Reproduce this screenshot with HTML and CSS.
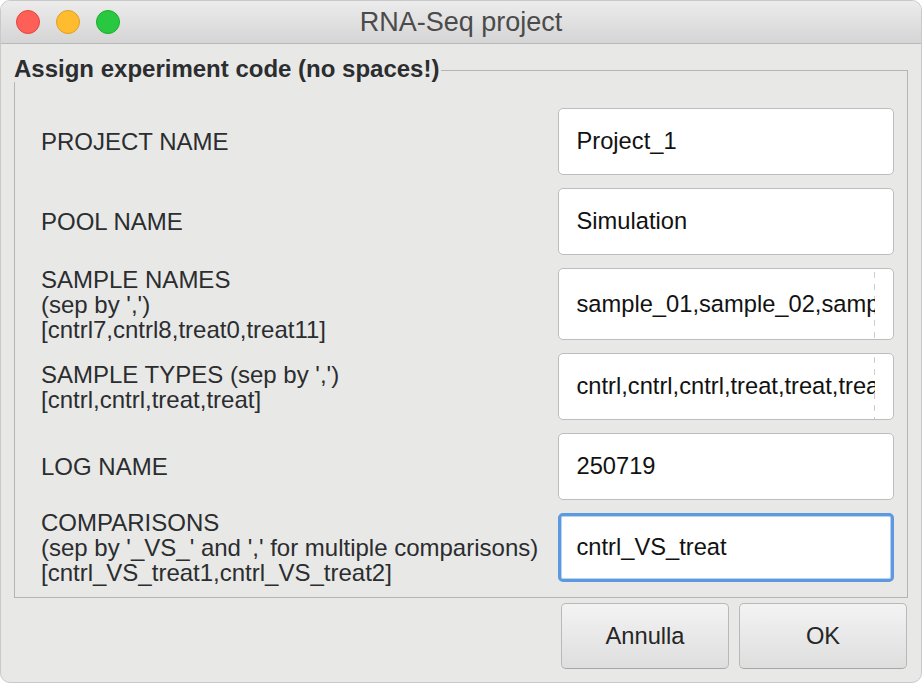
FILE: index.html
```html
<!DOCTYPE html>
<html lang="it">
<head>
<meta charset="utf-8">
<title>RNA-Seq project</title>
<link rel="stylesheet" href="styles.css">
</head>
<body>
<div class="window">
  <div class="titlebar">
    <div class="lights">
      <span class="light red"></span>
      <span class="light yellow"></span>
      <span class="light green"></span>
    </div>
    <div class="title">RNA-Seq project</div>
    <div></div>
  </div>
  <div class="content">
    <div class="group">
      <div class="group-head">
        <span class="group-title">Assign experiment code (no spaces!)</span>
        <span class="head-line"></span>
      </div>
      <div class="group-body">
        <div class="row">
          <div class="label">PROJECT NAME</div>
          <div class="field"><span class="field-text">Project_1</span></div>
        </div>
        <div class="row">
          <div class="label">POOL NAME</div>
          <div class="field"><span class="field-text">Simulation</span></div>
        </div>
        <div class="row tall">
          <div class="label">SAMPLE NAMES<br>(sep by ',')<br>[cntrl7,cntrl8,treat0,treat11]</div>
          <div class="field"><span class="field-text clipped">sample_01,sample_02,sample_03,sample_04</span></div>
        </div>
        <div class="row">
          <div class="label">SAMPLE TYPES (sep by ',')<br>[cntrl,cntrl,treat,treat]</div>
          <div class="field"><span class="field-text clipped">cntrl,cntrl,cntrl,treat,treat,treat</span></div>
        </div>
        <div class="row">
          <div class="label">LOG NAME</div>
          <div class="field"><span class="field-text">250719</span></div>
        </div>
        <div class="row last">
          <div class="label">COMPARISONS<br>(sep by '_VS_' and ',' for multiple comparisons)<br>[cntrl_VS_treat1,cntrl_VS_treat2]</div>
          <div class="field focused"><span class="field-text">cntrl_VS_treat</span></div>
        </div>
      </div>
    </div>
    <div class="buttons">
      <button class="btn" type="button">Annulla</button>
      <button class="btn" type="button">OK</button>
    </div>
  </div>
</div>
</body>
</html>
```
FILE: styles.css
```css
html, body {
  margin: 0;
  padding: 0;
  background: #ffffff;
}

body {
  font-family: "Liberation Sans", Arial, Helvetica, sans-serif;
}

.window {
  width: 922px;
  height: 683px;
  box-sizing: border-box;
  border: 1px solid #c9c9c9;
  border-radius: 10px;
  background: #e8e8e7;
  overflow: hidden;
}

.titlebar {
  height: 42px;
  border-bottom: 1px solid #b9b9b9;
  background: linear-gradient(to bottom, #ececec, #d5d5d5);
  display: grid;
  grid-template-columns: 1fr auto 1fr;
  align-items: center;
}

.lights {
  display: flex;
  gap: 16px;
  padding-left: 15px;
}

.light {
  width: 24px;
  height: 24px;
  box-sizing: border-box;
  border-radius: 50%;
  border: 1px solid;
}

.light.red { background: #fe5f57; border-color: #e2463f; }
.light.yellow { background: #febc2e; border-color: #df9f23; }
.light.green { background: #28c840; border-color: #1dab2c; }

.title {
  font-size: 27px;
  line-height: 42px;
  color: #4b4b4b;
  white-space: nowrap;
}

.content {
  padding: 12px 13px 0 13px;
}

.group-head {
  display: flex;
  height: 26px;
}

.group-title {
  font-weight: bold;
  font-size: 24px;
  line-height: 25px;
  color: #2b2d2f;
  white-space: nowrap;
}

.head-line {
  flex: 1;
  margin-left: 2px;
  margin-top: 14px;
  border-top: 1px solid #b5b5b5;
  border-right: 1px solid #b5b5b5;
}

.group-body {
  border: 1px solid #b5b5b5;
  border-top: none;
  padding: 26px 13px 15px 26px;
  display: flex;
  flex-direction: column;
  gap: 13px;
}

.row {
  display: flex;
  align-items: center;
  justify-content: space-between;
  height: 67px;
}

.row.tall { height: 72px; }
.row.last { height: 69px; }

.label {
  font-size: 24px;
  line-height: 25px;
  color: #2b2d2f;
  white-space: nowrap;
}

.field {
  width: 336px;
  height: 100%;
  box-sizing: border-box;
  border: 1px solid #bdbdbd;
  border-radius: 5px;
  background: #ffffff;
  display: flex;
  padding: 0 18px 0 17.5px;
}

.field.focused {
  border: 3px solid #5d99df;
  box-shadow: inset 0 0 0 1px #b9d2f1;
  padding: 0 16px 0 15.5px;
}

.field-text {
  flex: 1;
  display: flex;
  align-items: center;
  overflow: hidden;
  white-space: nowrap;
  font-size: 23.7px;
  line-height: 25px;
  color: #121212;
}

.field-text.clipped {
  padding-right: 1px;
  background: repeating-linear-gradient(to bottom, transparent 0 3px, #cdcdcd 3px 9px, transparent 9px 12px) right top / 1px 100% no-repeat;
}

.buttons {
  display: flex;
  justify-content: flex-end;
  gap: 10px;
  margin-top: 5px;
  padding-right: 1px;
}

.btn {
  width: 168px;
  height: 66px;
  padding: 0;
  font-family: "Liberation Sans", Arial, Helvetica, sans-serif;
  font-size: 23.7px;
  line-height: 25px;
  color: #262626;
  background: linear-gradient(to bottom, #f3f3f3, #dedede);
  border: 1px solid #b9b9b9;
  border-bottom-color: #a6a6a6;
  border-radius: 5px;
}
```
